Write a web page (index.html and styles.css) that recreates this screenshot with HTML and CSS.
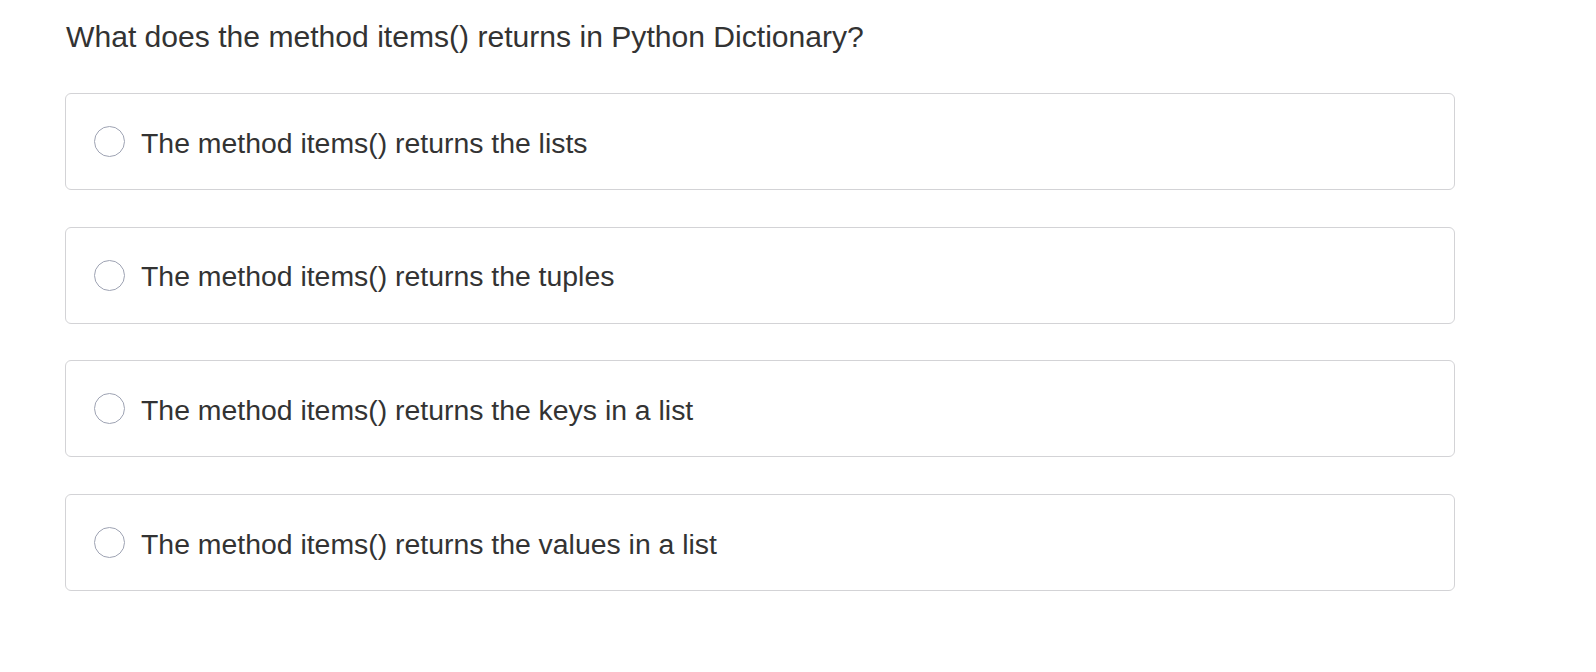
FILE: index.html
```html
<!DOCTYPE html>
<html lang="en">
<head>
<meta charset="utf-8">
<title>Quiz</title>
<link rel="stylesheet" href="styles.css">
</head>
<body>
<main class="quiz">
  <h1 class="question">What does the method items() returns in Python Dictionary?</h1>
  <div class="options">
    <label class="option"><span class="radio"></span><span class="option-text">The method items() returns the lists</span></label>
    <label class="option"><span class="radio"></span><span class="option-text">The method items() returns the tuples</span></label>
    <label class="option"><span class="radio"></span><span class="option-text">The method items() returns the keys in a list</span></label>
    <label class="option"><span class="radio"></span><span class="option-text">The method items() returns the values in a list</span></label>
  </div>
</main>
</body>
</html>
```

FILE: styles.css
```css
html, body {
  margin: 0;
  padding: 0;
  background: #ffffff;
}

body {
  font-family: "Liberation Sans", Arial, sans-serif;
  color: #333333;
}

.quiz {
  width: 1390px;
  padding-left: 65px;
  padding-top: 19px;
}

.question {
  margin: 0 0 38px 1px;
  font-size: 30.1px;
  line-height: 36px;
  font-weight: normal;
  color: #333333;
}

.options {
  display: flex;
  flex-direction: column;
  gap: 36.7px;
}

.option {
  box-sizing: border-box;
  height: 97px;
  border: 1px solid #d3d3d6;
  border-radius: 6px;
  display: flex;
  align-items: center;
  padding-left: 28px;
  gap: 16px;
}

.radio {
  box-sizing: border-box;
  width: 31px;
  height: 31px;
  border: 1px solid #9ea3b3;
  border-radius: 50%;
  flex: none;
  background: #fff;
}

.option-text {
  font-size: 28.4px;
  line-height: 34px;
  padding-top: 2px;
  color: #333333;
}
```
